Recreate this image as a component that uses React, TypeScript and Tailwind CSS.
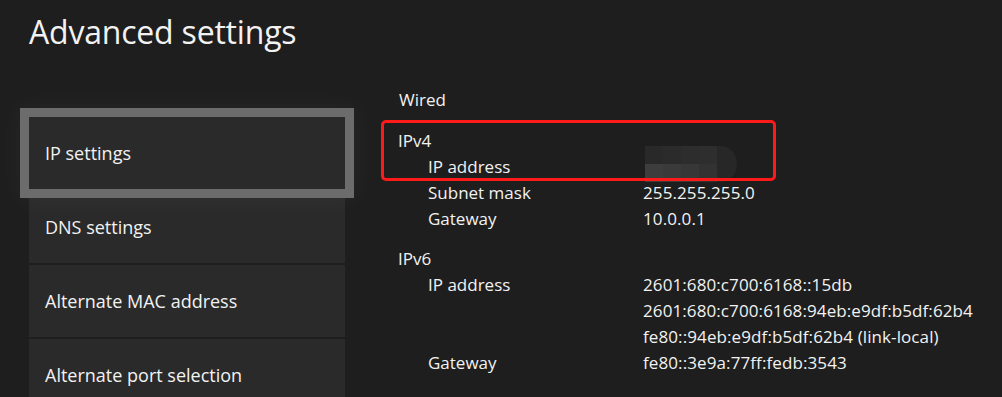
import React from "react";

const font = { fontFamily: '"Open Sans", "Noto Sans", sans-serif' };

function Blur() {
  return (
    <svg width="92" height="36" viewBox="0 0 92 36" className="block">
      <rect x="0" y="0" width="18" height="18" fill="#292929" />
      <rect x="18" y="0" width="18" height="18" fill="#2b2b2b" />
      <rect x="36" y="0" width="18" height="18" fill="#2d2d2d" />
      <rect x="54" y="0" width="18" height="18" fill="#2e2e2e" />
      <path d="M72 0 H76 A16 18 0 0 1 76 36 H72 Z" fill="#272727" />
      <rect x="0" y="18" width="18" height="18" fill="#3d3d3d" />
      <rect x="18" y="18" width="18" height="18" fill="#3a3a3a" />
      <rect x="36" y="18" width="18" height="18" fill="#373737" />
      <rect x="54" y="18" width="18" height="18" fill="#323232" />
    </svg>
  );
}

function Row({ label, values, heading }: { label: string; values?: React.ReactNode[]; heading?: boolean }) {
  return (
    <div className="flex">
      <div className={heading ? "w-[245px] h-[26px] leading-[26px]" : "w-[245px] pl-[30px] h-[26px] leading-[26px]"}>{label}</div>
      <div className="flex flex-col">
        {(values ?? []).map((v, i) => (
          <div key={i} className="h-[26px] leading-[26px] whitespace-nowrap tracking-[0.1px]">{v}</div>
        ))}
      </div>
    </div>
  );
}

export default function App() {
  const items = ["IP settings", "DNS settings", "Alternate MAC address", "Alternate port selection"];
  return (
    <div className="w-[1002px] h-[397px] overflow-hidden bg-[#1e1e1e] text-[#f2f2f2] relative" style={font}>
      <div className="pl-[29px] pt-[10px] text-[32px] leading-[44px] tracking-[-0.2px]">Advanced settings</div>
      <div className="flex mt-[63px]">
        <div className="w-[316px] ml-[29px] flex flex-col gap-[2px]">
          {items.map((t, i) => (
            <div
              key={t}
              className={
                i === 0
                  ? "h-[72px] bg-[#2a2a2a] flex items-center pl-[16px] text-[18px] outline-[9px] outline-solid outline-[#6c6c6c] shadow-[0_0_24px_12px_rgba(255,255,255,0.04)] relative z-10"
                  : "h-[72px] bg-[#2a2a2a] flex items-center pl-[16px] text-[18px]"
              }
            >
              {t}
            </div>
          ))}
        </div>
        <div className="ml-[53px] mt-[-30px] text-[17px] flex flex-col">
          <div className="pl-[1px]">
            <Row label="Wired" heading />
          </div>
          <div className="mt-[15px] relative">
            <div className="absolute left-[-17px] top-[-8px] w-[395px] h-[61px] border-[3px] border-[#ff1a1a] rounded-[5px]" />
            <Row label="IPv4" heading />
            <div className="flex h-[26px]">
              <div className="w-[247px] pl-[30px] h-[26px] leading-[26px]">IP address</div>
              <div className="h-[26px] mt-[-8px]">
                <Blur />
              </div>
            </div>
            <Row label="Subnet mask" values={["255.255.255.0"]} />
            <Row label="Gateway" values={["10.0.0.1"]} />
          </div>
          <div className="mt-[14px]">
            <Row label="IPv6" heading />
            <Row
              label="IP address"
              values={[
                "2601:680:c700:6168::15db",
                "2601:680:c700:6168:94eb:e9df:b5df:62b4",
                "fe80::94eb:e9df:b5df:62b4 (link-local)",
              ]}
            />
            <Row label="Gateway" values={["fe80::3e9a:77ff:fedb:3543"]} />
          </div>
          <div className="mt-[14px]">
            <Row label="DNS" values={["Manual"]} heading />
          </div>
        </div>
      </div>
    </div>
  );
}
